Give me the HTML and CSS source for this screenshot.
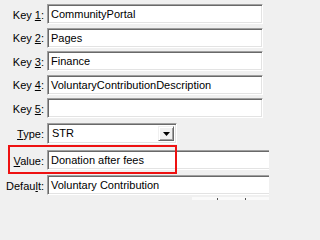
FILE: index.html
```html
<!DOCTYPE html>
<html>
<head>
<meta charset="utf-8">
<link rel="stylesheet" href="styles.css">
</head>
<body>
<div class="form">
  <div class="row r-key1"><span class="lbl">Key <u>1</u>:</span><div class="field key">CommunityPortal</div></div>
  <div class="row r-key"><span class="lbl">Key <u>2</u>:</span><div class="field key">Pages</div></div>
  <div class="row r-key"><span class="lbl">Key <u>3</u>:</span><div class="field key">Finance</div></div>
  <div class="row r-key"><span class="lbl">Key <u>4</u>:</span><div class="field key">VoluntaryContributionDescription</div></div>
  <div class="row r-key"><span class="lbl">Key <u>5</u>:</span><div class="field key"></div></div>
  <div class="row r-type"><span class="lbl"><u>T</u>ype:</span>
    <div class="combo"><span class="combo-text">STR</span>
      <span class="combo-btn"><svg width="7" height="4" viewBox="0 0 7 4"><path d="M0 0h7l-3.5 4z" fill="#000"/></svg></span>
    </div>
  </div>
  <div class="row r-value"><span class="lbl"><u>V</u>alue:</span><div class="field wide">Donation after fees</div>
    <div class="highlight"></div>
  </div>
  <div class="row r-default"><span class="lbl">Defau<u>l</u>t:</span><div class="field wide">Voluntary Contribution</div></div>
  <div class="next"><span class="tick t1"></span><span class="tick t2"></span></div>
</div>
</body>
</html>
```

FILE: styles.css
```css
html, body {
  margin: 0;
  padding: 0;
  background: #f0f0f0;
  overflow: hidden;
}
body {
  font-family: "Liberation Sans", Arial, sans-serif;
  font-size: 11px;
  color: #000;
}
.form {
  display: flex;
  flex-direction: column;
  padding-top: 4px;
  width: 269px;
  height: 200px;
  box-sizing: border-box;
  overflow: hidden;
}
.row {
  display: flex;
  align-items: center;
  position: relative;
  flex: none;
}
.r-key { margin-top: 3.5px; }
.r-type { margin-top: 5px; }
.r-value { margin-top: 6px; }
.r-default { margin-top: 5px; }
.lbl {
  width: 44px;
  flex: none;
  text-align: right;
  margin-right: 3px;
  white-space: nowrap;
  padding-top: 1px;
}
.lbl u { text-underline-offset: 1px; }
.field {
  box-sizing: border-box;
  height: 20px;
  background: #fff;
  border: 1px solid;
  border-color: #a0a0a0 #fff #fff #a0a0a0;
  box-shadow: inset 1px 1px #696969, inset -1px -1px #e3e3e3;
  padding: 0 0 0 3px;
  line-height: 18px;
  white-space: nowrap;
  overflow: hidden;
  flex: none;
}
.key { width: 216px; }
.wide {
  width: 240px;
}
.combo {
  box-sizing: border-box;
  width: 130px;
  height: 21px;
  background: #fff;
  border: 1px solid;
  border-color: #a0a0a0 #fff #fff #a0a0a0;
  box-shadow: inset 1px 1px #696969, inset -1px -1px #e3e3e3;
  display: flex;
  align-items: stretch;
  padding: 2px;
}
.combo-text {
  flex: 1;
  padding-left: 2px;
  line-height: 15px;
}
.combo-btn {
  box-sizing: border-box;
  width: 16px;
  background: #f0f0f0;
  border: 1px solid;
  border-color: #f0f0f0 #696969 #696969 #f0f0f0;
  box-shadow: inset 1px 1px #fff, inset -1px -1px #a0a0a0;
  display: flex;
  align-items: center;
  justify-content: center;
}
.combo-btn svg { display: block; }
.highlight {
  position: absolute;
  left: 8px;
  top: -5px;
  width: 169px;
  height: 29px;
  box-sizing: border-box;
  border: 2px solid #ee1111;
  pointer-events: none;
}
.next {
  margin-top: 2px;
  margin-left: 192px;
  height: 6px;
  background: #fafafa;
  position: relative;
  flex: none;
}
.tick {
  position: absolute;
  top: 1px;
  width: 1px;
  height: 3px;
  background: #555;
}
.t1 { left: 25px; }
.t2 { left: 53px; }
```
